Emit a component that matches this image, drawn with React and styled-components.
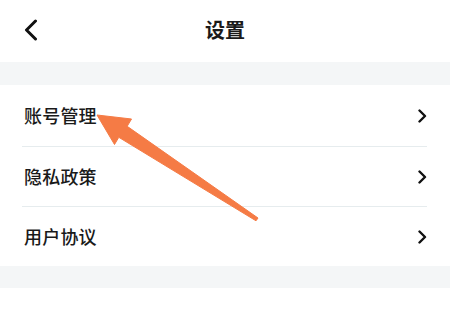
import React from "react"
import styled, { createGlobalStyle } from "styled-components"

const GlobalStyle = createGlobalStyle`
  html, body {
    margin: 0;
    padding: 0;
    background: #fff;
    font-family: "Noto Sans CJK SC", "Noto Sans", sans-serif;
  }
`

const Page = styled.div`
  position: relative;
  width: 450px;
  height: 310px;
  overflow: hidden;
  background: #fff;
`

const Header = styled.header`
  height: 62px;
  display: grid;
  grid-template-columns: 60px 1fr 60px;
  align-items: center;
`

const BackButton = styled.div`
  display: flex;
  align-items: center;
  padding-left: 24px;
  padding-bottom: 2px;
`

const Title = styled.h1`
  margin: 0;
  text-align: center;
  font-size: 20px;
  font-weight: 700;
  color: #1a1a1a;
  line-height: 1;
  padding-bottom: 2px;
`

const Gap = styled.div`
  height: ${p => p.h}px;
  background: #f4f6f7;
`

const List = styled.ul`
  margin: 0;
  padding: 0 23px 0 24px;
  list-style: none;
`

const Row = styled.li`
  height: ${p => p.h}px;
  display: flex;
  align-items: center;
  justify-content: space-between;
  border-bottom: ${p => (p.last ? "none" : "1px solid #e6ecee")};
  font-size: 18px;
  color: #1a1a1a;
  margin-left: -2px;
  padding-left: 2px;
`

const Label = styled.span`
  line-height: 1;
  font-weight: 500;
  letter-spacing: 0.2px;
  padding-bottom: 2px;
`

const Overlay = styled.svg`
  position: absolute;
  left: 0;
  top: 0;
  pointer-events: none;
`

const Chevron = () => (
  <svg width="10" height="14" viewBox="0 0 10 14">
    <path d="M2.5 1.5 L8 7 L2.5 12.5" fill="none" stroke="#111" strokeWidth="2.4" strokeLinecap="round" strokeLinejoin="round" />
  </svg>
)

const BackIcon = () => (
  <svg width="14" height="22" viewBox="0 0 14 22">
    <path d="M11.5 2 L2.5 11 L11.5 20" fill="none" stroke="#111" strokeWidth="3" strokeLinecap="round" strokeLinejoin="round" />
  </svg>
)

const items = [
  { label: "账号管理", h: 61 },
  { label: "隐私政策", h: 59 },
  { label: "用户协议", h: 59 },
]

export default function App() {
  return (
    <Page>
      <GlobalStyle />
      <Header>
        <BackButton>
          <BackIcon />
        </BackButton>
        <Title>设置</Title>
        <div />
      </Header>
      <Gap h={23} />
      <List>
        {items.map((it, i) => (
          <Row key={it.label} h={it.h} last={i === items.length - 1}>
            <Label>{it.label}</Label>
            <Chevron />
          </Row>
        ))}
      </List>
      <Gap h={22} />
      <Overlay width="450" height="310" viewBox="0 0 450 310">
        <polygon
          points="97,115 131.5,119 127.2,126.3 258,218 256,220.8 118.8,137.3 114.5,144.5"
          fill="#f57b45"
          stroke="#f57b45"
          strokeWidth="1"
          strokeLinejoin="round"
        />
      </Overlay>
    </Page>
  )
}
